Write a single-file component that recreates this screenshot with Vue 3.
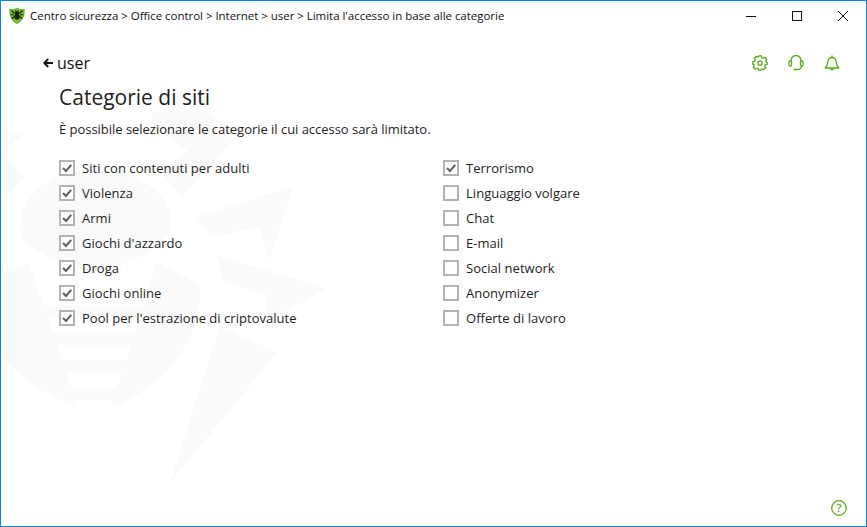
<template>
  <div class="window">
    <svg class="watermark" width="867" height="527" viewBox="0 0 867 527">
      <g fill="#fafafa">
        <polygon points="1,133 26,132 1,153" />
        <polygon points="1,153 25,178 1,200" />
        <path d="M22 240C14 205 40 170 95 170C150 170 178 205 169 232C160 250 135 262 95 272C65 266 40 255 22 240Z" />
        <path d="M1 273L28 262L43 305H143L157 262L200 285C204 340 165 385 112 408L112 400H75L77 408C45 395 20 378 1 353ZM48 317L53 333H135L142 317ZM57 345L62 360H126L131 345ZM66 373L71 388H117L122 373Z" fill-rule="evenodd" />
        <polygon points="157,130 188,150 162,173 182,198 235,138 208,112 150,112" />
        <polygon points="197,217 293,186 269,262 260,227 210,237" />
        <polygon points="217,256 327,288 262,325 268,295 223,283" />
        <polygon points="220,325 277,353 170,483" />
      </g>
    </svg>

    <div class="titlebar">
      <svg class="logo" width="16" height="16" viewBox="0 0 16 16">
        <path d="M.8 1.200C3.500 2.200 5.500 1.300 8 .3C10.500 1.300 12.500 2.200 15.200 1.200C15.700 7 14 12.500 8 15.700C2 12.500 .3 7 .8 1.200Z" fill="#74c61f" stroke="#4a8f12" stroke-width=".6" />
        <g stroke="#16240a" stroke-width="1.100" fill="none">
          <path d="M2.500 2.500L5.500 5.500M13.500 2.500L10.500 5.500M1.800 6.800H5M14.200 6.800H11M2.800 10.500L5.500 8.500M13.200 10.500L10.500 8.500M6.500 2.500L7.200 4M9.500 2.500L8.800 4" />
        </g>
        <ellipse cx="8" cy="5" rx="2.200" ry="1.800" fill="#16240a" />
        <ellipse cx="8" cy="8.800" rx="2.800" ry="3" fill="#16240a" />
      </svg>
      <span class="crumbs">Centro sicurezza &gt; Office control &gt; Internet &gt; user &gt; Limita l'accesso in base alle categorie</span>
      <div class="controls">
        <svg width="10" height="10" viewBox="0 0 10 10"><path d="M0 5.500H10" stroke="#111" fill="none" /></svg>
        <svg width="10" height="10" viewBox="0 0 10 10"><rect x=".5" y=".5" width="9" height="9" stroke="#111" fill="none" /></svg>
        <svg width="10" height="10" viewBox="0 0 10 10"><path d="M0 0L10 10M10 0L0 10" stroke="#111" fill="none" /></svg>
      </div>
    </div>

    <div class="topbar">
      <div class="back">
        <svg width="10" height="10" viewBox="0 0 10 10"><path d="M10 5H1.500M5.200 1L1.300 5L5.200 9" stroke="#111" stroke-width="1.900" fill="none" /></svg>
        <span>user</span>
      </div>
      <div class="tools">
        <svg width="16" height="16" viewBox="0 0 16 16" fill="none" stroke="#5aab1c" stroke-width="1.300">
          <path d="M6.700.800H9.300L9.700 2.700L11.200 3.300L12.800 2.300L14.700 4.200L13.700 5.800L14.300 7.300L15.200 7.700V8.300V9.300L13.300 9.700L12.700 11.200L13.700 12.800L11.800 14.700L10.200 13.700L9.300 14.200L9.300 15.200H6.700L6.300 13.800L4.800 13.200L3.200 14.200L1.300 12.300L2.300 10.700L1.700 9.300L.800 9.300V6.700L2.700 6.300L3.300 4.800L2.300 3.200L4.200 1.300L5.800 2.300L6.300 2Z" stroke-linejoin="round" />
          <circle cx="8" cy="8" r="2.200" />
        </svg>
        <svg width="16" height="16" viewBox="0 0 16 16" fill="none" stroke="#5aab1c" stroke-width="1.300">
          <path d="M3 7V5.500A5 5 0 0 1 13 5.500V7" />
          <rect x="1" y="6" width="2.500" height="5" rx="1.200" />
          <rect x="12.500" y="6" width="2.500" height="5" rx="1.200" />
          <path d="M13.500 11C13.500 13.500 11.500 14.500 9 14.500" />
          <ellipse cx="7.500" cy="14.500" rx="1.800" ry="1" fill="#5aab1c" stroke="none" />
        </svg>
        <svg width="16" height="16" viewBox="0 0 16 16" fill="none" stroke="#5aab1c" stroke-width="1.300">
          <path d="M1.300 13H14.700C13.200 11.500 12.600 10 12.300 7.500C12 4.500 10.800 2.500 8 2.500C5.200 2.500 4 4.500 3.700 7.500C3.400 10 2.800 11.500 1.300 13Z" stroke-linejoin="round" />
          <path d="M8 .500V2.500M6.200 13.500A1.900 1.900 0 0 0 9.800 13.500" />
        </svg>
      </div>
    </div>

    <main class="content">
      <h1>Categorie di siti</h1>
      <p>È possibile selezionare le categorie il cui accesso sarà limitato.</p>
      <div class="columns">
        <div v-for="(col, i) in columns" :key="i" class="column">
          <label v-for="item in col" :key="item.name" class="row">
            <span class="box">
              <svg v-if="item.on" width="10" height="10" viewBox="0 0 10 10"><path d="M1 5L4 8L9.200 1.800" stroke="#606060" stroke-width="2" fill="none" /></svg>
            </span>
            <span>{{ item.name }}</span>
          </label>
        </div>
      </div>
    </main>

    <svg class="help" width="16" height="16" viewBox="0 0 16 16" fill="none">
      <circle cx="8" cy="8" r="7.300" stroke="#5aab1c" stroke-width="1.300" />
      <text x="8" y="11.800" text-anchor="middle" fill="#5aab1c" font-size="11" font-weight="600" font-family="Open Sans, sans-serif">?</text>
    </svg>
  </div>
</template>

<script setup>
const columns = [
  [
    { name: 'Siti con contenuti per adulti', on: true },
    { name: 'Violenza', on: true },
    { name: 'Armi', on: true },
    { name: "Giochi d'azzardo", on: true },
    { name: 'Droga', on: true },
    { name: 'Giochi online', on: true },
    { name: "Pool per l'estrazione di criptovalute", on: true },
  ],
  [
    { name: 'Terrorismo', on: true },
    { name: 'Linguaggio volgare', on: false },
    { name: 'Chat', on: false },
    { name: 'E-mail', on: false },
    { name: 'Social network', on: false },
    { name: 'Anonymizer', on: false },
    { name: 'Offerte di lavoro', on: false },
  ],
]
</script>

<style>
html, body { margin: 0; background: #fff; }
</style>

<style scoped>
.window {
  position: relative; width: 867px; height: 527px; box-sizing: border-box;
  border: 1px solid #0f84de; background: #fff; overflow: hidden;
  font-family: "Open Sans", "Noto Sans", sans-serif; font-size: 13px; color: #1e1e1e;
}
.watermark { position: absolute; left: -1px; top: -1px; }
.titlebar {
  position: relative; display: flex; align-items: center; height: 29px;
  padding-left: 8px;
}
.logo { margin-right: 5px; }
.crumbs { font-size: 11.500px; letter-spacing: -0.03px; color: #111; }
.controls {
  margin-left: auto; display: flex; gap: 36px; padding-right: 18px;
}
.topbar {
  position: relative; display: flex; justify-content: space-between; align-items: center;
  height: 22px; margin-top: 22px; padding: 0 26px 0 42px;
}
.back { display: flex; align-items: center; gap: 4px; font-size: 16px; color: #111; }
.tools { display: flex; gap: 20px; }
.content { position: relative; padding: 8px 0 0 58px; }
h1 { margin: 0; font-size: 21px; font-weight: 400; line-height: 30px; color: #222; }
p { margin: 7px 0 0; line-height: 20px; letter-spacing: -0.03px; }
.columns { display: flex; margin-top: 16px; }
.column { width: 384px; display: flex; flex-direction: column; }
.row { display: flex; align-items: center; gap: 7px; height: 25px; letter-spacing: 0.03px; }
.box {
  width: 16px; height: 16px; box-sizing: border-box; border: 2px solid #b3b3b3;
  display: flex; align-items: center; justify-content: center; background: #fff;
}
.help { position: absolute; right: 19px; bottom: 10px; }
</style>
